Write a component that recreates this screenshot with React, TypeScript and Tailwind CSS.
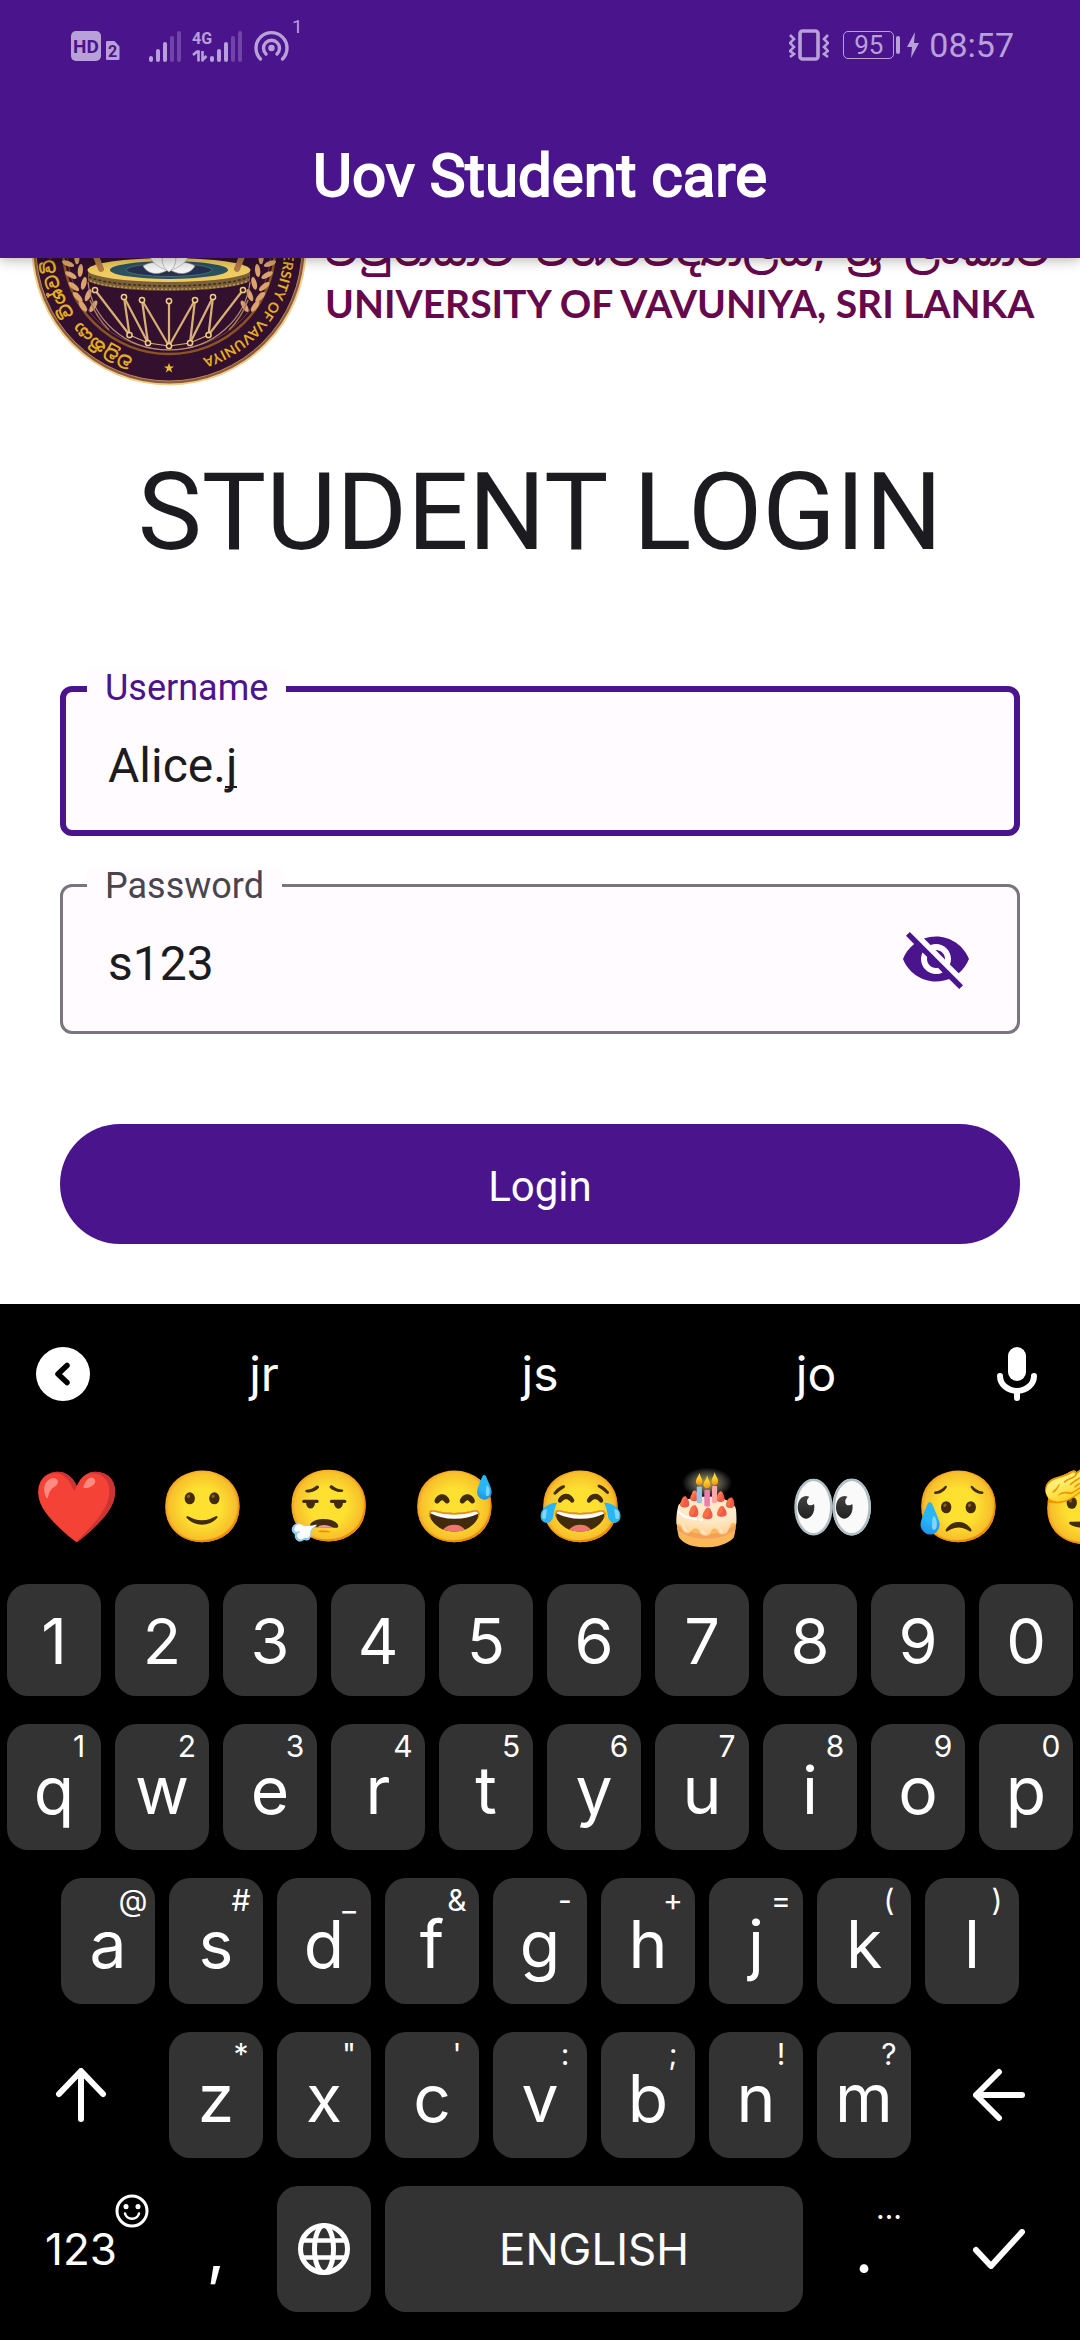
import React, { useState } from "react";
import { MdVisibilityOff, MdVisibility } from "react-icons/md";

const TINT = "#b8a0d8";

function StatusBar() {
  return (
    <div className="flex h-[90px] items-center justify-between pr-[66px] pl-[70px] text-[#b8a0d8]">
      <svg width="232" height="60" viewBox="70 15 232 60" role="img" aria-label="HD voice, signal, 4G, hotspot">
        <rect x="71" y="31" width="30" height="30" rx="5" fill={TINT} />
        <text x="86" y="53" textAnchor="middle" fontFamily="Roboto" fontWeight="700" fontSize="19" fill="#4a148c">HD</text>
        <path d="M107 42h7l4.500 5v12h-11.500z" fill={TINT} stroke={TINT} strokeWidth="2" strokeLinejoin="round" />
        <text x="112.500" y="57" textAnchor="middle" fontFamily="Roboto" fontWeight="700" fontSize="16" fill="#4a148c">2</text>
        <g stroke={TINT} strokeWidth="4" strokeLinecap="round">
          <path d="M151 58v2M158 51v9M165 44v16" />
          <path d="M172 38v22M179 33v27" opacity="0.35" />
          <path d="M212 58v2M219 51v9M226 44v16" />
          <path d="M233 38v22M240 33v27" opacity="0.35" />
        </g>
        <text x="192" y="44" fontFamily="Roboto" fontWeight="700" fontSize="16" fill={TINT}>4G</text>
        <path d="M193 55l4-3.500h1.500v10M202.500 51v10.500M202.500 60l4-4" fill="none" stroke={TINT} strokeWidth="2.600" />
        <g fill="none" stroke={TINT} strokeWidth="3.400" strokeLinecap="round">
          <path d="M260.500 59a15.500 15.500 0 1 1 22 0" />
          <path d="M266 54a8 8 0 1 1 11 0" />
          <circle cx="271.500" cy="48" r="1.500" fill={TINT} />
        </g>
        <text x="292" y="33" fontFamily="Roboto" fontSize="19" fill={TINT}>1</text>
      </svg>
      <div className="flex items-center">
        <svg width="40" height="32" viewBox="0 0 40 32" fill="none" stroke={TINT} aria-label="Vibrate" role="img">
          <rect x="11" y="2" width="18" height="28" rx="2.500" strokeWidth="3.600" />
          <path d="M1 6l4 4-4 4 4 4-4 4 4 3-4 3M39 6l-4 4 4 4-4 4 4 4-4 3 4 3" strokeWidth="2.600" />
        </svg>
        <span className="ml-[14px] flex h-7 w-[51px] items-center justify-center rounded-[5px] border-[1px] border-[#b8a0d8] text-[26px] leading-7">95</span>
        <span className="ml-[2px] h-[18px] w-1 rounded-full bg-[#b8a0d8]" />
        <svg className="ml-[7px]" width="13" height="26" viewBox="0 0 13 26" fill={TINT} aria-hidden="true">
          <path d="M8 0L0 15h5L4 26l8-15H7z" />
        </svg>
        <span className="ml-[9px] text-[34px] leading-10">08:57</span>
      </div>
    </div>
  );
}

const TOP_PEGS = [[95, 290], [124, 297], [142, 300], [169, 301], [195, 300], [213, 297], [243, 290]];
const LOW_PEGS = [[129.5, 335], [148, 343], [169, 346], [190, 343], [208.5, 335]];
const CORDS = [[0, 0], [1, 0], [1, 1], [2, 1], [2, 2], [3, 2], [4, 2], [4, 3], [5, 3], [5, 4], [6, 4]];
const LEAVES = [[72, 262, 30], [75, 274, 22], [78, 286, 14], [82, 297, 6], [87, 307, -4]];

function Leaves() {
  return (
    <g fill="#dba36d">
      {LEAVES.map(([x, y, a]) => (
        <g key={y} transform={`translate(${x} ${y}) rotate(${-a})`}>
          <ellipse cx="-3" cy="-3" rx="2.600" ry="6.500" transform="rotate(-38)" />
          <ellipse cx="5" cy="-4" rx="2.600" ry="6.500" transform="rotate(28)" />
        </g>
      ))}
    </g>
  );
}

function Emblem() {
  return (
    <svg className="h-[276px] w-[276px] shrink-0" viewBox="31 110 276 276" role="img" aria-label="University of Vavuniya emblem">
      <defs>
        <path id="ring" d="M169 363a115 115 0 1 1 0.100 0" />
      </defs>
      <circle cx="169" cy="248" r="137.500" fill="#f0cf8c" />
      <circle cx="169" cy="248" r="135.500" fill="#8e5a3c" />
      <circle cx="169" cy="248" r="133" fill="#34102f" stroke="#b98757" strokeWidth="1" />
      <circle cx="169" cy="248" r="106" fill="none" stroke="#8a5424" strokeWidth="2.500" />
      <circle cx="169" cy="248" r="102" fill="none" stroke="#6d4230" strokeWidth="1" />
      <Leaves />
      <g transform="matrix(-1 0 0 1 338 0)"><Leaves /></g>
      <path d="M88 282C92 318 124 350 169 350S246 318 250 282" fill="none" stroke="#b98f78" strokeWidth="1.200" />
      <path d="M90 300C95 314 101 322 109 330M248 300C243 314 237 322 229 330" fill="none" stroke="#a87850" strokeWidth="1.500" />
      <path d="M88 271v10c24 13 138 13 162 0v-10z" fill="#7b6038" />
      <path d="M90 281c26 11 132 11 158 0" fill="none" stroke="#c79c50" strokeWidth="1.500" strokeDasharray="2 2" />
      <path d="M89 277c26 12 134 12 160 0" fill="none" stroke="#3f2c22" strokeWidth="1.500" strokeDasharray="3 2" />
      <ellipse cx="169" cy="270" rx="81.500" ry="12" fill="#efcb62" />
      <ellipse cx="169" cy="270" rx="59" ry="9" fill="#2b5260" />
      <ellipse cx="169" cy="270" rx="43" ry="6.500" fill="#26304f" stroke="#4b7076" />
      <path d="M95 254l6 15M243 254l-6 15" stroke="#b27a4a" strokeWidth="6" strokeLinecap="round" />
      <g fill="#f4f4f4" stroke="#999" strokeWidth="0.600">
        <path d="M169 269c-8 6-20 7-26-3 8-5 18-5 26 3zM169 269c8 6 20 7 26-3-8-5-18-5-26 3z" />
        <path d="M169 271c-12-4-20-10-20-19 10 1 17 6 20 19zM169 271c12-4 20-10 20-19-10 1-17 6-20 19z" />
        <path d="M169 272c-9-6-9-18 0-26 9 8 9 20 0 26z" />
      </g>
      <g stroke="#d8b074" strokeWidth="2.200" fill="none">
        {CORDS.map(([a, b]) => (
          <path key={`${a}-${b}`} d={`M${TOP_PEGS[a][0]} ${TOP_PEGS[a][1]}L${LOW_PEGS[b][0]} ${LOW_PEGS[b][1]}`} />
        ))}
        <path d="M129.500 335L148 343L169 346L190 343L208.500 335" strokeWidth="1.200" />
      </g>
      <g fill="#34102f" stroke="#f0d080" strokeWidth="1.500">
        {[...TOP_PEGS, ...LOW_PEGS].map(([x, y]) => <circle key={`${x}-${y}`} cx={x} cy={y} r="2.600" />)}
      </g>
      <path d="M169 363l1.300 3.500h3.700l-3 2.300 1.200 3.700-3.200-2.200-3.200 2.200 1.200-3.700-3-2.300h3.700z" fill="#eebb2c" />
      <g fill="#e3ae22" fontWeight="700">
        <text fontFamily="'Noto Sans Sinhala', 'Noto Serif Sinhala', sans-serif" fontSize="17">
          <textPath href="#ring" startOffset="36">වවුනියා විශ්වවිද්‍යාලය</textPath>
        </text>
        <text fontFamily="Lato" fontSize="14" textAnchor="end">
          <textPath href="#ring" startOffset="688">UNIVERSITY OF VAVUNIYA</textPath>
        </text>
      </g>
    </svg>
  );
}

type FieldProps = {
  id: string;
  label: string;
  value: string;
  onChange: (v: string) => void;
  active?: boolean;
  type?: string;
  children?: React.ReactNode;
};

function Field({ id, label, value, onChange, active, type = "text", children }: FieldProps) {
  return (
    <div
      className={
        "relative flex h-[150px] items-center rounded-xl bg-[#fffbfe] " +
        (active ? "border-[6px] border-[#4a148c] px-[42px]" : "border-[3px] border-[#79747e] px-[45px]")
      }
    >
      <label
        htmlFor={id}
        className={
          "absolute bg-[#fffbfe] px-[18px] text-[36px] leading-[36px] " +
          (active ? "-top-[22px] left-[21px] text-[#4a148c]" : "-top-[19px] left-[24px] text-[#49454f]")
        }
      >
        {label}
      </label>
      <input
        id={id}
        type={type}
        value={value}
        autoComplete="off"
        onChange={(e) => onChange(e.target.value)}
        className="h-16 min-w-0 flex-1 bg-transparent pt-2 text-[48px] leading-[56px] text-[#1c1b1f] outline-none"
      />
      {children}
    </div>
  );
}

function Key({ label, hint, start = "" }: { label: string; hint?: string; start?: string }) {
  return (
    <button type="button" className={`relative col-span-2 mx-[7px] h-[126px] rounded-[21px] bg-[#333333] pt-[6px] text-[66px] leading-[98px] ${start}`}>
      {label}
      {hint && <span className="absolute top-[4px] right-0 w-11 text-center text-[30px] leading-9">{hint}</span>}
    </button>
  );
}

const EMOJI = ["❤️", "🙂", "😮‍💨", "😅", "😂", "🎂", "👀", "😥", "🫡"];
const ROW_Q = ["q1", "w2", "e3", "r4", "t5", "y6", "u7", "i8", "o9", "p0"];
const ROW_A = ["a@", "s#", "d_", "f&", "g-", "h+", "j=", "k(", "l)"];
const ROW_Z = ["z*", 'x"', "c'", "v:", "b;", "n!", "m?"];

function Keyboard() {
  const stroke = { fill: "none", stroke: "currentColor", strokeWidth: 6, strokeLinecap: "round", strokeLinejoin: "round" } as const;
  return (
    <section aria-label="Keyboard" className="overflow-hidden bg-black pb-7 font-[Inter] text-white">
      <div className="flex h-[140px] items-center">
        <button type="button" aria-label="Collapse suggestions" className="flex w-[126px] justify-center">
          <svg width="54" height="54" viewBox="0 0 54 54">
            <circle cx="27" cy="27" r="27" fill="#fff" />
            <path d="M31 18.500l-9 8.500 9 8.500" fill="none" stroke="#000" strokeWidth="5.500" strokeLinecap="round" strokeLinejoin="round" />
          </svg>
        </button>
        <div className="grid flex-1 grid-cols-3 text-[48px] leading-[60px]">
          <button type="button">jr</button>
          <button type="button">js</button>
          <button type="button">jo</button>
        </div>
        <button type="button" aria-label="Voice input" className="flex w-[126px] justify-center">
          <svg width="40" height="54" viewBox="0 0 40 54">
            <rect x="11" y="0" width="18" height="34" rx="9" fill="#fff" />
            <path d="M3 29a17 15 0 0 0 34 0M20 44v7" fill="none" stroke="#fff" strokeWidth="6" strokeLinecap="round" />
          </svg>
        </button>
      </div>
      <div className="flex h-[140px] items-center overflow-hidden pb-[14px] pl-[14px]">
        {EMOJI.map((e) => (
          <button type="button" key={e} className="flex w-[126px] shrink-0 justify-center font-['Noto_Color_Emoji'] text-[70px] leading-[80px]">{e}</button>
        ))}
      </div>
      <div className="grid grid-cols-10">
        {"1234567890".split("").map((n) => (
          <button type="button" key={n} className="mx-[7px] h-28 rounded-[21px] bg-[#333333] pt-[2px] text-[63px] leading-[110px]">{n}</button>
        ))}
      </div>
      <div className="mt-7 grid grid-cols-20 gap-y-7">
        {ROW_Q.map((k) => <Key key={k} label={k[0]} hint={k[1]} />)}
        {ROW_A.map((k, i) => <Key key={k} label={k[0]} hint={k[1]} start={i === 0 ? "col-start-2" : ""} />)}
        <button type="button" aria-label="Shift" className="col-span-3 col-start-1 mx-[7px] flex items-center justify-center">
          <svg width="52" height="54" viewBox="0 0 52 54" {...stroke}><path d="M26 51V4M4 26L26 3l22 23" /></svg>
        </button>
        {ROW_Z.map((k) => <Key key={k} label={k[0]} hint={k[1]} />)}
        <button type="button" aria-label="Backspace" className="col-span-3 mx-[7px] flex items-center justify-center">
          <svg width="52" height="54" viewBox="0 0 52 54" {...stroke}><path d="M49 27H3M26 4L3 27l23 23" /></svg>
        </button>
        <button type="button" className="relative col-span-3 mx-[7px] h-[126px] text-[44px] leading-[126px]">
          123
          <svg className="absolute top-2 right-[6px]" width="34" height="34" viewBox="0 0 34 34" fill="none" stroke="#fff" strokeWidth="3">
            <circle cx="17" cy="17" r="15" />
            <path d="M10 19.500c2 7 12 7 14 0" strokeLinecap="round" strokeWidth="2.500" />
            <path d="M11 12.500v.2M23 12.500v.2" strokeLinecap="round" strokeWidth="5" />
          </svg>
        </button>
        <button type="button" className="col-span-2 mx-[7px] text-[66px] leading-[98px]">,</button>
        <button type="button" aria-label="Change language" className="col-span-2 mx-[7px] flex items-center justify-center rounded-[21px] bg-[#333333]">
          <svg width="52" height="52" viewBox="0 0 52 52" fill="none" stroke="#fff" strokeWidth="5">
            <circle cx="26" cy="26" r="23.500" />
            <ellipse cx="26" cy="26" rx="9.500" ry="23.500" />
            <path d="M4 17.500h44M4 34.500h44" strokeWidth="4.500" />
          </svg>
        </button>
        <button type="button" className="col-span-8 mx-[7px] rounded-[21px] bg-[#333333] text-[44px] leading-[126px]">ENGLISH</button>
        <button type="button" className="relative col-span-2 mx-[7px] text-[66px] leading-[98px]">
          .
          <span className="absolute top-[4px] right-0 w-11 text-center text-[30px] leading-9">…</span>
        </button>
        <button type="button" aria-label="Done" className="col-span-3 mx-[7px] flex items-center justify-center">
          <svg width="52" height="40" viewBox="0 0 52 40" {...stroke}><path d="M3 21l15 16L49 3" /></svg>
        </button>
      </div>
    </section>
  );
}

export default function App() {
  const [user, setUser] = useState("Alice.j");
  const [pass, setPass] = useState("s123");
  const [shown, setShown] = useState(true);
  return (
    <div className="flex min-h-screen flex-col overflow-hidden bg-white font-[Roboto]">
      <header className="relative z-10 bg-[#4a148c] shadow-[0_2px_12px_rgba(0,0,0,0.3)]">
        <StatusBar />
        <h1 className="h-[168px] text-center text-[60px] leading-[172px] text-white [-webkit-text-stroke:2px_white]">Uov Student care</h1>
      </header>
      <main className="flex flex-1 flex-col">
        <div className="flex h-32 items-end gap-[18px] overflow-hidden pl-[31px] text-[#66084c]">
          <Emblem />
          <div className="pb-[60px] whitespace-nowrap">
            <p className="mb-1 font-['Noto_Sans_Sinhala',sans-serif] text-[41px] leading-[48px] font-semibold">වවුනියාව විශ්වවිද්‍යාලය, ශ්‍රී ලංකාව</p>
            <p className="font-[Lato] text-[39px] leading-[46px] font-bold">UNIVERSITY OF VAVUNIYA, SRI LANKA</p>
          </div>
        </div>
        <h2 className="pt-[62px] text-center text-[108px] leading-[128px] text-[#1c1b1f]">STUDENT LOGIN</h2>
        <form className="flex flex-1 flex-col px-[60px] pt-[110px] pb-[60px]" onSubmit={(e) => e.preventDefault()}>
          <div className="relative mb-12">
            <Field id="username" label="Username" value={user} onChange={setUser} active />
            {user === "Alice.j" && <span aria-hidden="true" className="absolute top-[100px] left-[165px] h-[2px] w-3 bg-[#1c1b1f]" />}
          </div>
          <Field id="password" label="Password" value={pass} onChange={setPass} type={shown ? "text" : "password"}>
            <button type="button" aria-label="Toggle password visibility" onClick={() => setShown(!shown)} className="text-[72px] text-[#4a148c]">
              {shown ? <MdVisibilityOff /> : <MdVisibility />}
            </button>
          </Field>
          <button type="submit" className="mt-[90px] h-[120px] rounded-full bg-[#4a148c] pt-1 text-[42px] text-white">Login</button>
        </form>
      </main>
      <Keyboard />
    </div>
  );
}
